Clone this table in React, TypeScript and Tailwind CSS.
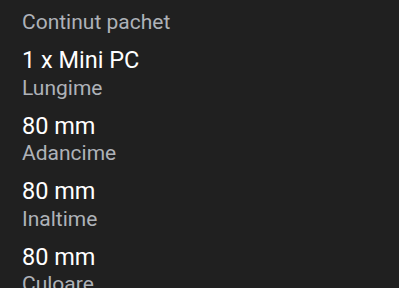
import React from 'react';

interface Spec {
    label: string;
    value: string;
}

const specs: Spec[] = [
    { label: 'Continut pachet', value: '1 x Mini PC' },
    { label: 'Lungime', value: '80 mm' },
    { label: 'Adancime', value: '80 mm' },
    { label: 'Inaltime', value: '80 mm' },
    { label: 'Culoare', value: 'Negru' },
];

const App: React.FC = () => {
    return (
        <div className="h-[288px] w-full overflow-hidden bg-[#202020] px-[22px] pt-[10px] font-['Roboto',sans-serif]">
            <div className="flex flex-col gap-[0.5px]">
                {specs.map((spec, index) => (
                    <div key={index} className="flex flex-col">
                        <span className="text-[21px] leading-6 text-[#aeb2b8]">{spec.label}</span>
                        <span className="mt-[11px] text-[23.5px] leading-[30px] text-white">{spec.value}</span>
                    </div>
                ))}
            </div>
        </div>
    );
};

export default App;
